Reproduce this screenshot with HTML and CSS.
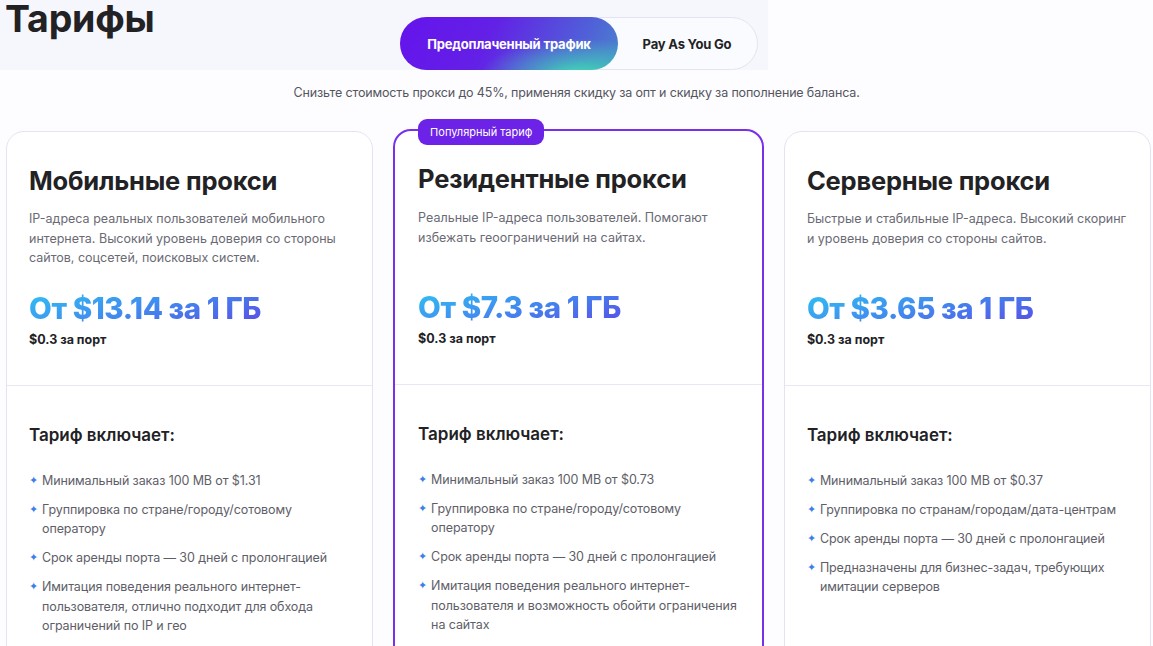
FILE: index.html
```html
<!DOCTYPE html>
<html lang="ru">
<head>
<meta charset="utf-8">
<title>Тарифы</title>
<link rel="stylesheet" href="styles.css">
</head>
<body>
<header class="head">
  <h1 class="page-title">Тарифы</h1>
  <div class="toggle">
    <button class="toggle-btn active">Предоплаченный трафик</button>
    <button class="toggle-btn">Pay As You Go</button>
  </div>
  <div></div>
</header>
<p class="subtitle">Снизьте стоимость прокси до 45%, применяя скидку за опт и скидку за пополнение баланса.</p>

<main class="cards">
  <section class="card">
    <div class="card-top">
      <h2 class="card-title">Мобильные прокси</h2>
      <p class="card-desc">IP-адреса реальных пользователей мобильного интернета. Высокий уровень доверия со стороны сайтов, соцсетей, поисковых систем.</p>
      <div class="price">От $13.14 за 1 ГБ</div>
      <div class="port">$0.3 за порт</div>
    </div>
    <div class="card-bottom">
      <h3 class="inc-title">Тариф включает:</h3>
      <ul class="features">
        <li>Минимальный заказ 100 MB от $1.31</li>
        <li>Группировка по стране/городу/сотовому оператору</li>
        <li>Срок аренды порта — 30 дней с пролонгацией</li>
        <li>Имитация поведения реального интернет-пользователя, отлично подходит для обхода ограничений по IP и гео</li>
      </ul>
    </div>
  </section>

  <section class="card popular">
    <span class="badge">Популярный тариф</span>
    <div class="card-top">
      <h2 class="card-title">Резидентные прокси</h2>
      <p class="card-desc">Реальные IP-адреса пользователей. Помогают избежать геоограничений на сайтах.</p>
      <div class="price">От $7.3 за 1 ГБ</div>
      <div class="port">$0.3 за порт</div>
    </div>
    <div class="card-bottom">
      <h3 class="inc-title">Тариф включает:</h3>
      <ul class="features">
        <li>Минимальный заказ 100 MB от $0.73</li>
        <li>Группировка по стране/городу/сотовому оператору</li>
        <li>Срок аренды порта — 30 дней с пролонгацией</li>
        <li>Имитация поведения реального интернет-пользователя и возможность обойти ограничения на сайтах</li>
      </ul>
    </div>
  </section>

  <section class="card">
    <div class="card-top">
      <h2 class="card-title">Серверные прокси</h2>
      <p class="card-desc">Быстрые и стабильные IP-адреса. Высокий скоринг и уровень доверия со стороны сайтов.</p>
      <div class="price">От $3.65 за 1 ГБ</div>
      <div class="port">$0.3 за порт</div>
    </div>
    <div class="card-bottom">
      <h3 class="inc-title">Тариф включает:</h3>
      <ul class="features">
        <li>Минимальный заказ 100 MB от $0.37</li>
        <li>Группировка по странам/городам/дата-центрам</li>
        <li>Срок аренды порта — 30 дней с пролонгацией</li>
        <li>Предназначены для бизнес-задач, требующих имитации серверов</li>
      </ul>
    </div>
  </section>
</main>
</body>
</html>
```

FILE: styles.css
```css
* { box-sizing: border-box; }

html, body {
  margin: 0;
  padding: 0;
  background: #fdfdff;
  font-family: Inter, "Noto Sans", sans-serif;
  color: #222225;
  overflow: hidden;
}

.head {
  display: grid;
  grid-template-columns: 1fr auto 1fr;
  align-items: start;
  height: 70px;
  padding-left: 5px;
  background: linear-gradient(to right, #f6f7fc 0, #f6f7fc 768px, #fdfdff 768px);
}

.page-title {
  margin: 0;
  font-size: 37.5px;
  line-height: 37px;
  font-weight: 700;
  color: #222225;
  letter-spacing: -0.2px;
}

.toggle {
  display: flex;
  margin-top: 17px;
  width: 358px;
  height: 53px;
  border: 1px solid #e2e5f1;
  border-radius: 27px;
  background: #fafbfe;
}

.toggle-btn {
  border: 0;
  background: transparent;
  font-family: inherit;
  font-size: 13px;
  font-weight: 700;
  color: #222225;
  border-radius: 27px;
  flex: 1;
  cursor: pointer;
  margin: -1px;
  letter-spacing: -0.2px;
}

.toggle-btn.active {
  flex: 0 0 218px;
  color: #fff;
  background:
    radial-gradient(ellipse 45% 70% at 82% 110%, #3fe0b2 0, rgba(63,224,178,0.55) 40%, rgba(63,224,178,0) 100%),
    linear-gradient(115deg, #6514ec 0, #6320e6 40%, #5060d8 80%, #4a85cc 100%);
}

.subtitle {
  margin: 13px 0 0;
  text-align: center;
  font-size: 12.5px;
  line-height: 20px;
  color: #55555e;
  letter-spacing: -0.15px;
}

.cards {
  display: grid;
  grid-template-columns: 1fr 1.01fr 1fr;
  gap: 20px;
  padding: 0 2px 0 6px;
  margin-top: 28px;
}

.card {
  position: relative;
  border: 1px solid #e2e5f1;
  border-radius: 18px;
  background: #fff;
  padding-bottom: 60px;
}

.card.popular {
  border: 2.5px solid #7a2fe9;
  margin-top: -2px;
}

.badge {
  position: absolute;
  top: -12px;
  left: 23px;
  height: 26px;
  padding: 0 12px;
  display: flex;
  align-items: center;
  background: #6d22e8;
  color: #fff;
  font-size: 11px;
  border-radius: 9px;
}

.card-top {
  padding: 34px 22px 36px;
  border-bottom: 1px solid #e6e8f2;
}

.popular .card-top { padding: 33px 17px 36px 23px; }
.popular .card-desc { margin-top: 14px; }
.popular .card-bottom { padding-left: 23px; padding-right: 17px; }

.card-title {
  margin: 0;
  font-size: 25.5px;
  line-height: 30px;
  font-weight: 700;
  color: #222225;
  letter-spacing: -0.2px;
}

.card-desc {
  margin: 13px 0 0;
  font-size: 12.5px;
  line-height: 19.5px;
  color: #6a6a74;
  min-height: 58.5px;
}

.price {
  margin-top: 23px;
  font-size: 29.5px;
  line-height: 34px;
  font-weight: 800;
  letter-spacing: -0.4px;
  background: linear-gradient(165deg, #2fc2f2 0, #3f8ff0 45%, #5a4de6 100%);
  -webkit-background-clip: text;
  background-clip: text;
  color: transparent;
  display: inline-block;
}

.port {
  margin-top: 6px;
  font-size: 12.5px;
  line-height: 18px;
  font-weight: 700;
  color: #222225;
}

.card-bottom {
  padding: 37px 22px 0;
}

.inc-title {
  margin: 0;
  font-size: 17px;
  line-height: 24px;
  font-weight: 600;
  color: #222225;
}

.features {
  list-style: none;
  margin: 24px 0 0;
  padding: 0;
  display: flex;
  flex-direction: column;
  gap: 9.5px;
}

.features li {
  position: relative;
  padding-left: 13px;
  font-size: 12.5px;
  line-height: 19.5px;
  color: #5e5e68;
  letter-spacing: -0.1px;
}

.features li::before {
  content: "✦";
  position: absolute;
  left: 0;
  top: 0;
  font-size: 11px;
  color: #3d7fe6;
  font-family: "DejaVu Sans", sans-serif;
}
```
